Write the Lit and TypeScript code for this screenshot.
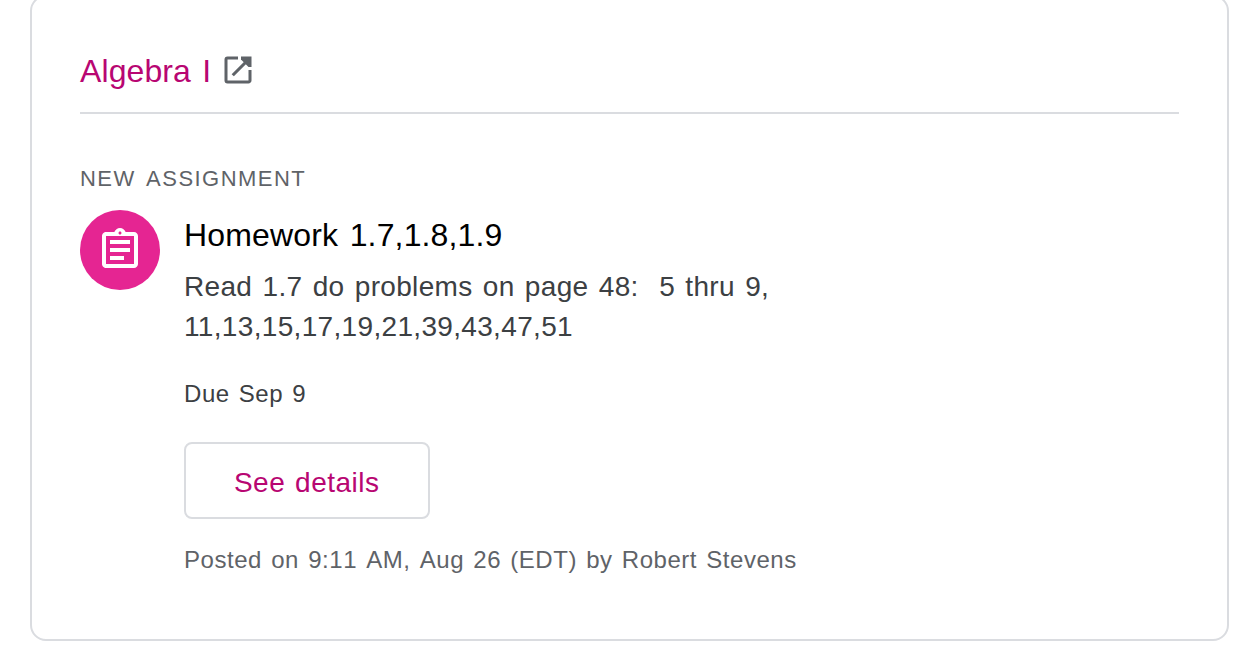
import { LitElement, html, css } from 'lit';
import { customElement, property } from 'lit/decorators.js';

interface Assignment {
  title: string;
  description: string;
  due: string;
  posted: string;
}

@customElement('assignment-item')
class AssignmentItem extends LitElement {
  @property({ attribute: false }) item!: Assignment;

  static styles = css`
    :host {
      display: flex;
      gap: 24px;
      margin-top: 16px;
    }

    .badge {
      display: flex;
      align-items: center;
      justify-content: center;
      flex: none;
      width: 80px;
      height: 80px;
      border-radius: 50%;
      background: #e52592;
    }

    .badge svg {
      width: 48px;
      height: 48px;
      fill: #fff;
    }

    .content {
      display: flex;
      flex-direction: column;
      align-items: flex-start;
      padding-top: 5px;
    }

    .title {
      margin: 0;
      color: #000;
      font-size: 32px;
      font-weight: 400;
      line-height: 40px;
      letter-spacing: 0.15px;
      word-spacing: 2.5px;
    }

    .description {
      margin: 12px 0 0;
      color: #3c4043;
      font-size: 28px;
      line-height: 40px;
      letter-spacing: 0.33px;
      word-spacing: 2.15px;
      white-space: pre-line;
    }

    .due {
      margin: 31px 0 0;
      color: #3c4043;
      font-size: 24px;
      line-height: 32px;
      letter-spacing: 0.55px;
      word-spacing: 1.9px;
    }

    button {
      box-sizing: border-box;
      width: 245.5px;
      height: 77px;
      margin: 32px 0 0;
      padding: 4px 0 0;
      border: 2px solid #dadce0;
      border-radius: 8px;
      background: #fff;
      color: #b80672;
      font: inherit;
      font-size: 28px;
      letter-spacing: 0.5px;
      word-spacing: 1.6px;
    }

    .posted {
      margin: 25px 0 0;
      color: #5f6368;
      font-size: 24px;
      font-kerning: none;
      line-height: 32px;
      letter-spacing: 0.54px;
      word-spacing: 2px;
    }
  `;

  render() {
    return html`
      <div class="badge">
        <svg viewBox="0 0 24 24">
          <path
            d="M7 15h7v2H7zm0-4h10v2H7zm0-4h10v2H7zm12-4h-4.18C14.4 1.84 13.3 1 12 1c-1.3 0-2.4.84-2.82 2H5c-.14 0-.27.01-.4.04-.39.08-.74.28-1.01.55-.18.18-.33.4-.43.64-.1.23-.16.49-.16.77v14c0 .27.06.54.16.78s.25.45.43.64c.27.27.62.47 1.01.55.13.02.26.03.4.03h14c1.1 0 2-.9 2-2V5c0-1.1-.9-2-2-2zm-7-.25c.41 0 .75.34.75.75s-.34.75-.75.75-.75-.34-.75-.75.34-.75.75-.75zM19 19H5V5h14v14z"
          />
        </svg>
      </div>
      <div class="content">
        <h2 class="title">${this.item.title}</h2>
        <p class="description">${this.item.description}</p>
        <p class="due">${this.item.due}</p>
        <button>See details</button>
        <p class="posted">${this.item.posted}</p>
      </div>
    `;
  }
}

@customElement('app-root')
class AppRoot extends LitElement {
  static styles = css`
    :host {
      display: block;
      box-sizing: border-box;
      height: 656px;
      padding: 0 24px 15px 30px;
      overflow: hidden;
      background: #fff;
      font-family: 'Liberation Sans', Arial, sans-serif;
    }

    .card {
      box-sizing: border-box;
      height: 646px;
      margin-top: -5px;
      padding: 57px 48px 0;
      border: 2px solid #dadce0;
      border-radius: 16px;
    }

    .course {
      display: flex;
      align-items: flex-start;
      box-sizing: border-box;
      height: 60px;
      border-bottom: 2px solid #dadce0;
    }

    .course a {
      color: #b80672;
      font-size: 32px;
      line-height: 34px;
      letter-spacing: 0.1px;
      word-spacing: 2.2px;
      text-decoration: none;
    }

    .course svg {
      width: 36px;
      height: 36px;
      margin-top: -2px;
      margin-left: 9px;
      fill: #5f6368;
    }

    .course .arrow {
      fill: none;
      stroke: #5f6368;
      stroke-width: 2.1;
    }

    .label {
      margin: 50px 0 0;
      color: #5f6368;
      font-size: 22px;
      line-height: 30px;
      letter-spacing: 1.47px;
      word-spacing: 4px;
    }
  `;

  private item: Assignment = {
    title: 'Homework 1.7,1.8,1.9',
    description:
      'Read 1.7 do problems on page 48: \u00a05 thru 9,\n11,13,15,17,19,21,39,43,47,51',
    due: 'Due Sep 9',
    posted: 'Posted on 9:11 AM, Aug 26 (EDT) by Robert Stevens',
  };

  render() {
    return html`
      <div class="card">
        <div class="course">
          <a>Algebra I</a>
          <svg viewBox="0 0 24 24">
            <path
              d="M19 19H5V5h7V3H5a2 2 0 0 0-2 2v14a2 2 0 0 0 2 2h14c1.1 0 2-.9 2-2v-7h-2v7z"
            />
            <path d="M14 3h7v7h-2l-5-5z" />
            <path class="arrow" d="M8.5 15.5L19.5 4.5" />
          </svg>
        </div>
        <p class="label">NEW ASSIGNMENT</p>
        <assignment-item .item=${this.item}></assignment-item>
      </div>
    `;
  }
}
